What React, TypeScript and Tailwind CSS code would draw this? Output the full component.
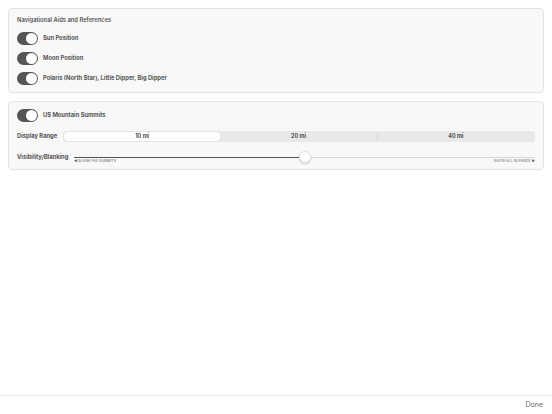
import React from "react";

function Toggle() {
  return (
    <div className="relative h-[13px] w-[21px] shrink-0 rounded-full bg-[#555555]">
      <div className="absolute right-[1px] top-[1px] h-[11px] w-[11px] rounded-full bg-white" />
    </div>
  );
}

function Row({ label }: { label: string }) {
  return (
    <div className="flex h-[13px] items-center gap-[5px]">
      <Toggle />
      <span className="text-[5.8px] font-bold text-[#555]">{label}</span>
    </div>
  );
}

export default function App() {
  return (
    <div
      className="flex h-[414px] w-[552px] flex-col bg-white"
      style={{ fontFamily: '"Inter", "Liberation Sans", sans-serif' }}
    >
      <div className="flex flex-1 flex-col gap-[8px] p-[8px]">
        <div className="flex flex-col rounded-[4px] border border-[#e2e2e2] bg-[#f8f8f8] px-[8px] pb-[7px] pt-[7px]">
          <div className="mb-[8px] text-[5.8px] font-semibold leading-[8px] text-[#555]">
            Navigational Aids and References
          </div>
          <div className="flex flex-col gap-[7px]">
            <Row label="Sun Position" />
            <Row label="Moon Position" />
            <Row label="Polaris (North Star), Little Dipper, Big Dipper" />
          </div>
        </div>
        <div className="flex flex-col rounded-[4px] border border-[#e2e2e2] bg-[#f8f8f8] px-[8px] pb-[6px] pt-[7px]">
          <Row label="US Mountain Summits" />
          <div className="mt-[9px] flex items-center">
            <span className="w-[46px] text-[5.8px] font-bold text-[#555]">Display Range</span>
            <div className="flex h-[11px] flex-1 items-center rounded-[3px] bg-[#e8e8e8] p-[1px]">
              <div className="flex h-full flex-1 items-center justify-center rounded-[3px] bg-white text-[5.5px] font-semibold text-[#333] shadow-[0_0_1px_rgba(0,0,0,0.2)]">
                10 mi
              </div>
              <div className="flex h-full flex-1 items-center justify-center text-[5.5px] font-semibold text-[#333]">
                20 mi
              </div>
              <div className="h-[7px] w-px bg-[#d4d4d4]" />
              <div className="flex h-full flex-1 items-center justify-center text-[5.5px] font-semibold text-[#333]">
                40 mi
              </div>
            </div>
          </div>
          <div className="mt-[9px] flex h-[12px] items-center">
            <span className="w-[57px] text-[5.8px] font-bold text-[#555]">
              Visibility/Blanking
            </span>
            <div className="relative h-full flex-1">
              <div className="absolute left-0 right-0 top-[6px] h-px bg-[#d6d6d6]" />
              <div className="absolute left-0 top-[5.5px] h-[1.5px] w-[230px] bg-[#555]" />
              <div className="absolute left-0 top-[8px] text-[3.6px] leading-[4px] text-[#666]">
                ◀ BLANK FAR SUMMITS
              </div>
              <div className="absolute right-0 top-[8px] text-[3.6px] leading-[4px] text-[#666]">
                SHOW ALL IN RANGE ▶
              </div>
              <div className="absolute left-[225px] top-0 h-[12px] w-[12px] rounded-full border border-[#e4e4e4] bg-white shadow-[0_1px_2px_rgba(0,0,0,0.2)]" />
            </div>
          </div>
        </div>
      </div>
      <div className="flex h-[19px] items-center justify-end border-t border-[#ececec] px-[9px]">
        <span className="text-[7px] text-[#666]">Done</span>
      </div>
    </div>
  );
}
